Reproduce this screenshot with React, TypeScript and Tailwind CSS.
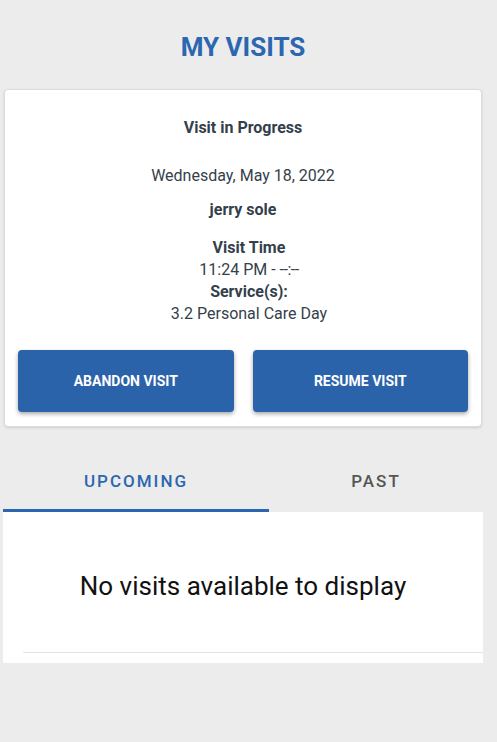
export default function App() {
  return (
    <div className="min-h-[742px] w-[497px] bg-[#ebeceb] font-['Roboto',sans-serif] text-[#343f4b]">
      <h1 className="w-[486px] pt-[32px] text-center text-[26px] font-bold leading-[30px] text-[#2b67b1]">MY VISITS</h1>

      <section className="ml-[4px] mt-[27px] w-[478px] rounded-[4px] border border-[#dcdcdc] bg-white px-[13px] pb-[14px] pt-[28px] shadow-sm">
        <p className="text-center text-[16px] font-bold leading-[20px]">Visit in Progress</p>
        <p className="mt-[28px] text-center text-[16px] leading-[20px]">Wednesday, May 18, 2022</p>
        <p className="mt-[14px] text-center text-[16px] font-bold leading-[20px]">jerry sole</p>
        <div className="mt-[17px] pl-[12px] text-center text-[16px] leading-[22px]">
          <p className="font-bold">Visit Time</p>
          <p>
            11:24 PM - <span className="tracking-[-0.5px]">--:--</span>
          </p>
          <p className="font-bold">Service(s):</p>
          <p>3.2 Personal Care Day</p>
        </div>
        <div className="mt-[25px] flex gap-[19px]">
          <button className="h-[62px] flex-1 rounded-[4px] bg-[#2b63ab] text-[14px] font-bold text-white shadow-[0_2px_4px_rgba(0,0,0,0.35)]">
            ABANDON VISIT
          </button>
          <button className="h-[62px] flex-1 rounded-[4px] bg-[#2b63ab] text-[14px] font-bold text-white shadow-[0_2px_4px_rgba(0,0,0,0.35)]">
            RESUME VISIT
          </button>
        </div>
      </section>

      <div className="ml-[3px] mt-[29px] w-[480px]">
        <div className="flex">
          <div className="flex h-[56px] w-[266px] items-center justify-center border-b-[3px] border-[#2b67b1] pb-[2px] text-[17px] font-medium tracking-[2px] text-[#2b67b1]">
            UPCOMING
          </div>
          <div className="flex h-[56px] flex-1 items-center justify-center pb-[5px] text-[17px] font-medium tracking-[2px] text-[#555555]">
            PAST
          </div>
        </div>
        <div className="h-[151px] bg-white pt-[58px]">
          <p className="text-center text-[26px] leading-[32px] text-[#111111]">No visits available to display</p>
          <div className="ml-[20px] mt-[50px] border-t border-[#e3e3e3]" />
        </div>
      </div>
    </div>
  );
}
